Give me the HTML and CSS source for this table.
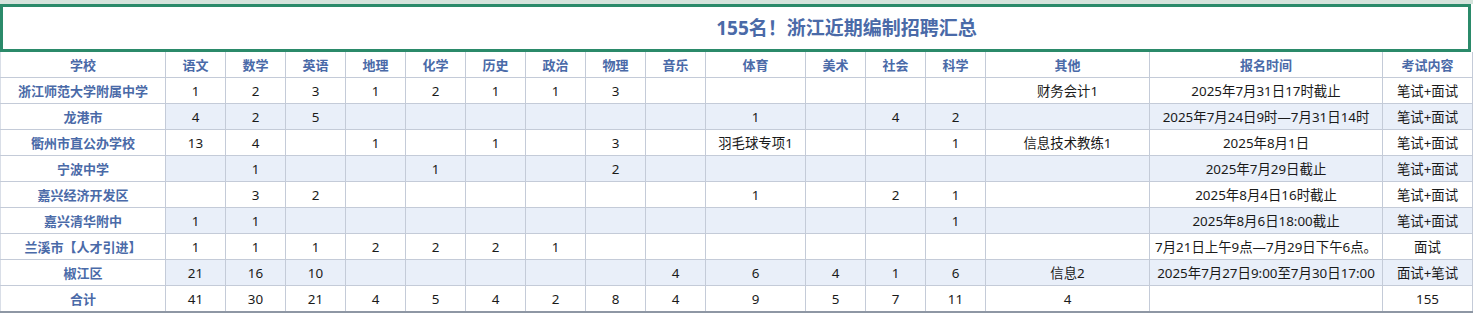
FILE: index.html
```html
<!DOCTYPE html>
<html lang="zh-CN">
<head>
<meta charset="utf-8">
<title>155名！浙江近期编制招聘汇总</title>
<link rel="stylesheet" href="styles.css">
</head>
<body>
<div class="page">
  <div class="topband"></div>
  <div class="titlebox"><h1 class="title">155名！浙江近期编制招聘汇总</h1></div>
  <table class="sheet">
    <colgroup>
      <col class="c-school"><col class="c-n"><col class="c-n"><col class="c-n"><col class="c-n"><col class="c-n"><col class="c-n"><col class="c-n"><col class="c-n"><col class="c-n"><col class="c-pe"><col class="c-n"><col class="c-n"><col class="c-n"><col class="c-other"><col class="c-time"><col class="c-exam">
    </colgroup>
    <thead>
      <tr><th>学校</th><th>语文</th><th>数学</th><th>英语</th><th>地理</th><th>化学</th><th>历史</th><th>政治</th><th>物理</th><th>音乐</th><th>体育</th><th>美术</th><th>社会</th><th>科学</th><th>其他</th><th>报名时间</th><th>考试内容</th></tr>
    </thead>
    <tbody>
      <tr><th>浙江师范大学附属中学</th><td>1</td><td>2</td><td>3</td><td>1</td><td>2</td><td>1</td><td>1</td><td>3</td><td></td><td></td><td></td><td></td><td></td><td>财务会计1</td><td>2025年7月31日17时截止</td><td>笔试+面试</td></tr>
      <tr class="alt"><th>龙港市</th><td>4</td><td>2</td><td>5</td><td></td><td></td><td></td><td></td><td></td><td></td><td>1</td><td></td><td>4</td><td>2</td><td></td><td>2025年7月24日9时—7月31日14时</td><td>笔试+面试</td></tr>
      <tr><th>衢州市直公办学校</th><td>13</td><td>4</td><td></td><td>1</td><td></td><td>1</td><td></td><td>3</td><td></td><td>羽毛球专项1</td><td></td><td></td><td>1</td><td>信息技术教练1</td><td>2025年8月1日</td><td>笔试+面试</td></tr>
      <tr class="alt"><th>宁波中学</th><td></td><td>1</td><td></td><td></td><td>1</td><td></td><td></td><td>2</td><td></td><td></td><td></td><td></td><td></td><td></td><td>2025年7月29日截止</td><td>笔试+面试</td></tr>
      <tr><th>嘉兴经济开发区</th><td></td><td>3</td><td>2</td><td></td><td></td><td></td><td></td><td></td><td></td><td>1</td><td></td><td>2</td><td>1</td><td></td><td>2025年8月4日16时截止</td><td>笔试+面试</td></tr>
      <tr class="alt"><th>嘉兴清华附中</th><td>1</td><td>1</td><td></td><td></td><td></td><td></td><td></td><td></td><td></td><td></td><td></td><td></td><td>1</td><td></td><td>2025年8月6日18:00截止</td><td>笔试+面试</td></tr>
      <tr><th>兰溪市【人才引进】</th><td>1</td><td>1</td><td>1</td><td>2</td><td>2</td><td>2</td><td>1</td><td></td><td></td><td></td><td></td><td></td><td></td><td></td><td>7月21日上午9点—7月29日下午6点。</td><td>面试</td></tr>
      <tr class="alt"><th>椒江区</th><td>21</td><td>16</td><td>10</td><td></td><td></td><td></td><td></td><td></td><td>4</td><td>6</td><td>4</td><td>1</td><td>6</td><td>信息2</td><td>2025年7月27日9:00至7月30日17:00</td><td>面试+笔试</td></tr>
      <tr class="total"><th>合计</th><td>41</td><td>30</td><td>21</td><td>4</td><td>5</td><td>4</td><td>2</td><td>8</td><td>4</td><td>9</td><td>5</td><td>7</td><td>11</td><td>4</td><td></td><td>155</td></tr>
    </tbody>
  </table>
</div>
</body>
</html>
```
FILE: styles.css
```css
html, body {
  margin: 0;
  padding: 0;
  background: #ffffff;
}
body {
  font-family: "Noto Sans", "Noto Sans CJK SC", sans-serif;
  font-size: 13px;
  color: #1a1a1a;
}
.page {
  width: 1473px;
}
.topband {
  height: 4px;
  background: #d5e3dc;
}
.titlebox {
  box-sizing: border-box;
  width: 1471px;
  height: 48px;
  border: 3px solid #2b8a6a;
  display: flex;
  align-items: center;
  justify-content: center;
  padding-left: 222px;
}
.title {
  margin: 0;
  font-size: 19px;
  font-weight: 700;
  color: #4a6aa8;
  letter-spacing: 0;
  line-height: 1;
}
.sheet {
  border-collapse: collapse;
  table-layout: fixed;
  width: 1472px;
  border-bottom: 2px solid #8e97a4;
}
.c-school { width: 165px; }
.c-n { width: 60px; }
.c-pe { width: 100px; }
.c-other { width: 164px; }
.c-time { width: 233px; }
.c-exam { width: 90px; }
.sheet th, .sheet td {
  border: 1px solid #c4cbd8;
  height: 25px;
  padding: 0 1px;
  text-align: center;
  white-space: nowrap;
  overflow: visible;
  line-height: 18px;
}
.sheet td {
  font-size: 13.4px;
}
.sheet thead th {
  height: 25px;
  border-top: none;
  color: #4a6aa8;
  font-weight: 700;
}
.sheet tbody th {
  color: #4a6aa8;
  font-weight: 700;
  background: #ffffff;
}
.sheet th:first-child, .sheet td:first-child {
  border-left-color: #d9dee7;
}
.sheet tr.alt td {
  background: #e9eff9;
}
```
